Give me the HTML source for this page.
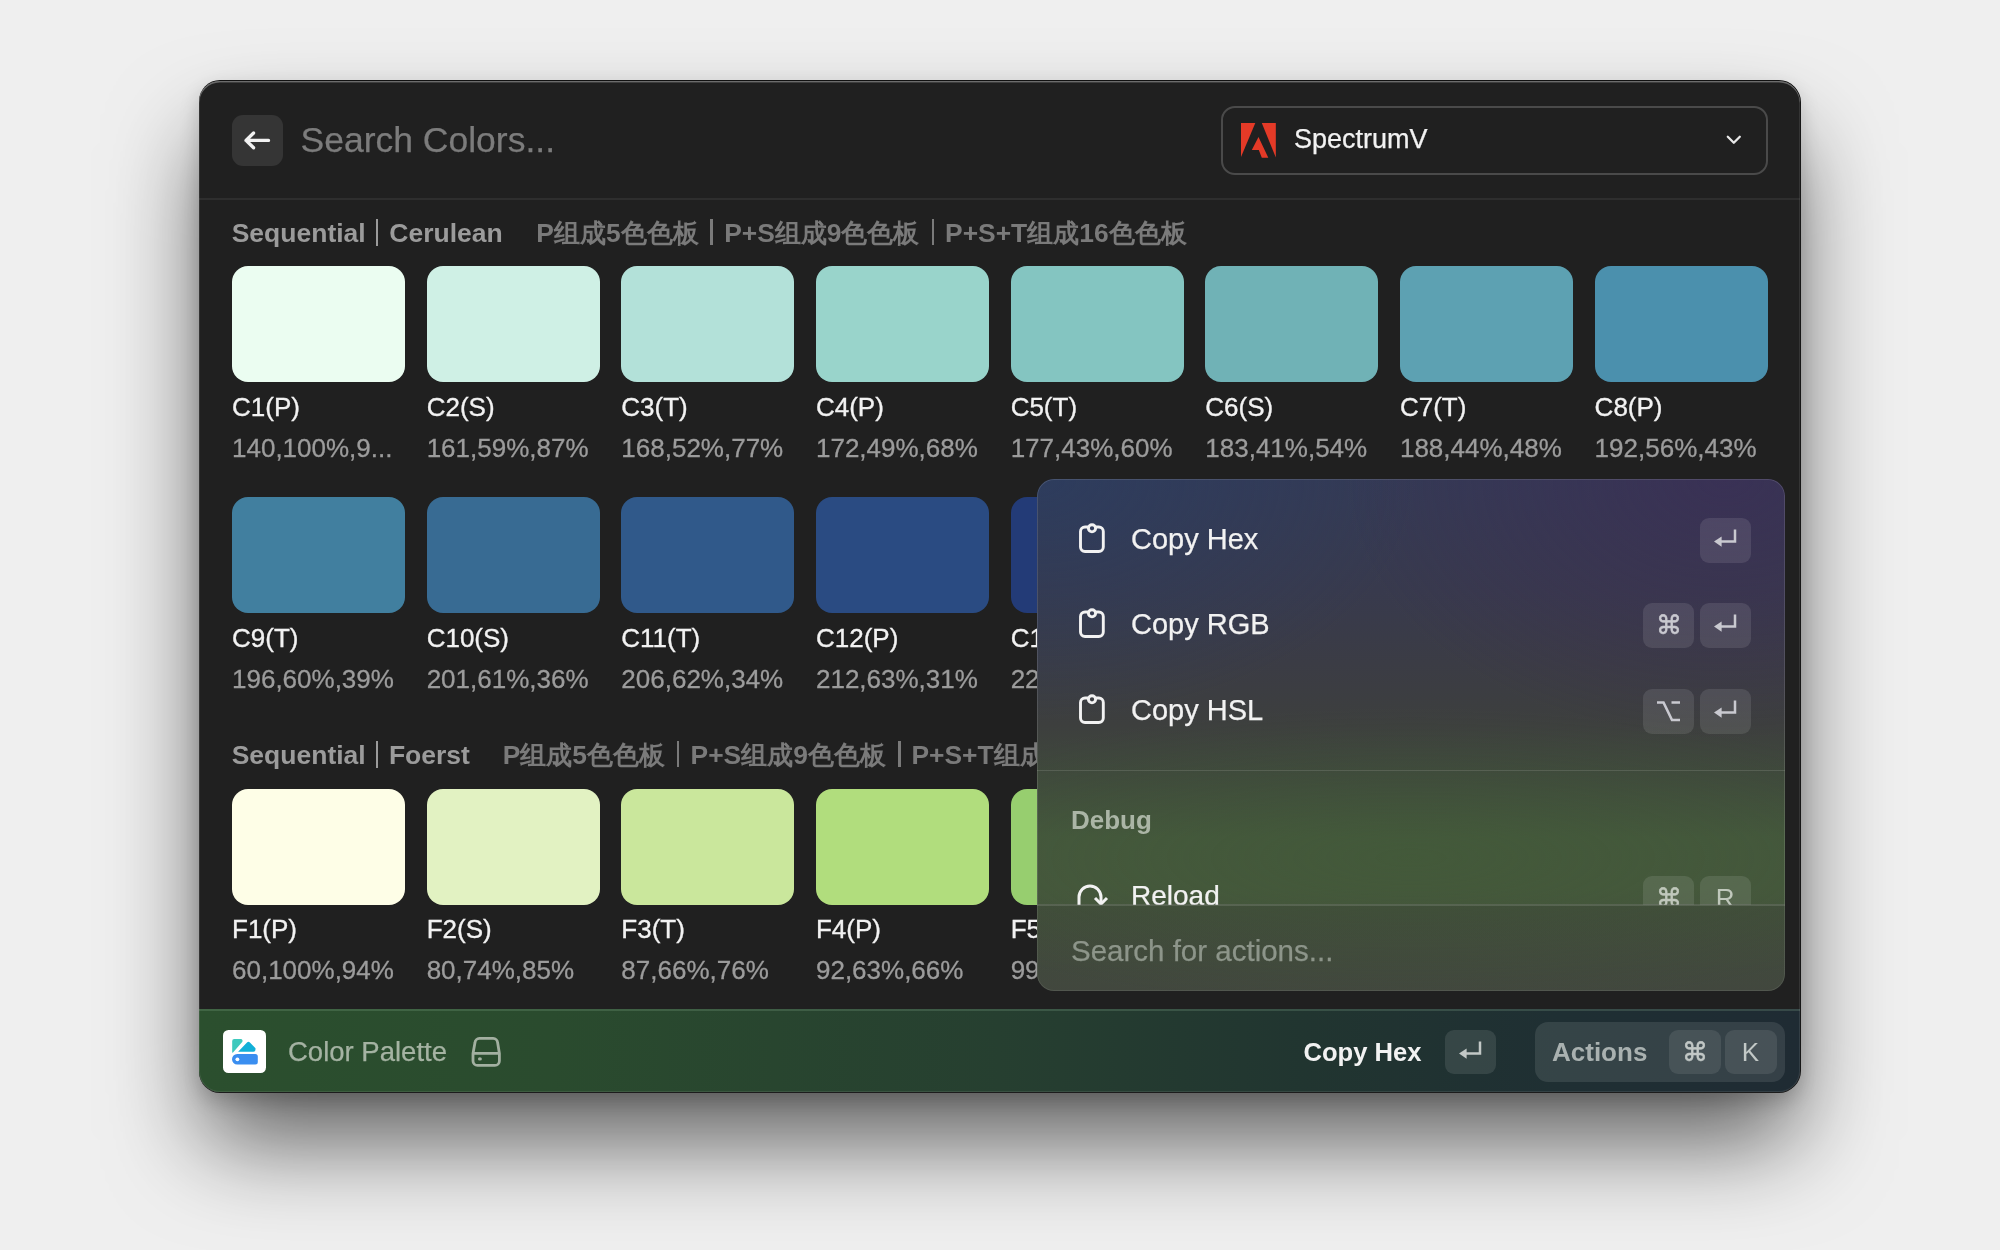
<!DOCTYPE html>
<html><head><meta charset="utf-8">
<style>
*{box-sizing:border-box;margin:0;padding:0}
html,body{width:2000px;height:1250px;overflow:hidden;background:#efefef;font-family:"Liberation Sans",sans-serif}
.abs{position:absolute}
.t{position:absolute;white-space:nowrap;line-height:1}
#win{will-change:transform;position:absolute;left:199px;top:81px;width:1601px;height:1011px;border-radius:21px;background:#202020;overflow:hidden}
#shadow{position:absolute;left:199px;top:81px;width:1601px;height:1011px;border-radius:21px;box-shadow:0 -1px 0 #121212, 0 1px 0 #1c1c1c, 1px 0 0 #161616, 0 55px 95px -5px rgba(0,0,0,0.6), 0 8px 20px rgba(0,0,0,0.18)}
.key{position:absolute;width:51px;height:45px;border-radius:9px;background:rgba(255,255,255,0.10)}
#panel{position:absolute;left:837.5px;top:397.7px;width:748.2px;height:512.7px;border-radius:17px;overflow:hidden;
 background:
  radial-gradient(ellipse 380px 260px at 92% 0%, rgba(62,42,85,0.55), rgba(62,42,85,0) 100%),
  radial-gradient(ellipse 380px 240px at 0% 0%, rgba(40,62,100,0.55), rgba(40,62,100,0) 100%),
  radial-gradient(ellipse 560px 150px at 50% 74%, rgba(65,92,55,0.4), rgba(65,92,55,0) 100%),
  linear-gradient(180deg,#343a55 0%,#383a4d 22%,#3b3c45 36%,#3d3f3e 48%,#3f493c 58%,#44573c 70%,#45573c 80%,#444c3f 100%);
 box-shadow:inset 0 0 0 1px rgba(255,255,255,0.12)}
</style></head>
<body>
<div id="shadow"></div>
<div id="win">
<div class="abs" style="left:33.2px;top:34px;width:50.8px;height:51px;border-radius:11px;background:#353535"></div>
<svg class="abs" style="left:33px;top:34px" width="51" height="51" viewBox="0 0 51 51">
<path d="M36.5 25.4H14 M21.6 18 L14 25.4 L21.6 32.8" stroke="#f2f2f2" stroke-width="3.4" fill="none" stroke-linecap="round" stroke-linejoin="round"/></svg>
<div class="t" style="left:101.5px;top:42.05px;font-size:35.5px;color:#7c7c7c;font-weight:400;-webkit-text-stroke:0.25px #7c7c7c;">Search Colors...</div>
<div class="abs" style="left:1021.5px;top:25.2px;width:547.5px;height:68.4px;border:2px solid #4a4a4a;border-radius:14px"></div>
<svg class="abs" style="left:1042.2px;top:42px" width="35" height="35" viewBox="0 0 35 35">
<polygon points="0,0 14.3,0 0,34" fill="#e43a27"/><polygon points="20.8,0 34.8,0 34.8,34.5" fill="#e43a27"/>
<polygon points="17.5,14 27.3,34.8 20.8,34.8 17.8,27 10.8,27" fill="#e43a27"/></svg>
<div class="t" style="left:1095px;top:45.14px;font-size:27px;color:#f2f2f2;font-weight:400;-webkit-text-stroke:0.25px #f2f2f2;">SpectrumV</div>
<svg class="abs" style="left:1525px;top:52px" width="20" height="14" viewBox="0 0 20 14">
<path d="M3.8 3.8 L9.8 9.8 L15.8 3.8" stroke="#e8e8e8" stroke-width="2.3" fill="none" stroke-linecap="round" stroke-linejoin="round"/></svg>
<div class="abs" style="left:0px;top:117px;width:1601px;height:2px;background:#2e2e2e"></div>

<div class="t" style="left:32.7px;top:138.67px;font-size:26.5px;color:#9b9b9b;font-weight:700;">Sequential</div>
<div class="abs" style="left:176.6px;top:138.4px;width:2.5px;height:26.2px;background:#9b9b9b"></div>
<div class="t" style="left:190.3px;top:138.67px;font-size:26.5px;color:#9b9b9b;font-weight:700;">Cerulean</div>
<div class="t" style="left:337.3px;top:138.75px;font-size:26.4px;color:#7a7a7a;font-weight:700;">P组成5色色板</div>
<div class="t" style="left:525.2px;top:138.75px;font-size:26.4px;color:#7a7a7a;font-weight:700;">P+S组成9色色板</div>
<div class="t" style="left:746.1px;top:138.75px;font-size:26.4px;color:#7a7a7a;font-weight:700;">P+S+T组成16色色板</div>
<div class="abs" style="left:511.4px;top:138.3px;width:2.4px;height:26.0px;background:#7a7a7a"></div>
<div class="abs" style="left:732.8px;top:138.3px;width:2.4px;height:26.0px;background:#7a7a7a"></div>
<div class="abs" style="left:33.0px;top:185px;width:173.0px;height:115.5px;border-radius:16px;background:#ebfdf1"></div>
<div class="t" style="left:33.0px;top:313.19px;font-size:26px;color:#f2f2f2;font-weight:400;-webkit-text-stroke:0.35px #f2f2f2">C1(P)</div>
<div class="t" style="left:33.0px;top:353.89px;font-size:26px;color:#9c9c9c;font-weight:400;-webkit-text-stroke:0.3px #9c9c9c">140,100%,9...</div>
<div class="abs" style="left:227.66px;top:185px;width:173.0px;height:115.5px;border-radius:16px;background:#cff0e5"></div>
<div class="t" style="left:227.66px;top:313.19px;font-size:26px;color:#f2f2f2;font-weight:400;-webkit-text-stroke:0.35px #f2f2f2">C2(S)</div>
<div class="t" style="left:227.66px;top:353.89px;font-size:26px;color:#9c9c9c;font-weight:400;-webkit-text-stroke:0.3px #9c9c9c">161,59%,87%</div>
<div class="abs" style="left:422.32px;top:185px;width:173.0px;height:115.5px;border-radius:16px;background:#b3e1d9"></div>
<div class="t" style="left:422.32px;top:313.19px;font-size:26px;color:#f2f2f2;font-weight:400;-webkit-text-stroke:0.35px #f2f2f2">C3(T)</div>
<div class="t" style="left:422.32px;top:353.89px;font-size:26px;color:#9c9c9c;font-weight:400;-webkit-text-stroke:0.3px #9c9c9c">168,52%,77%</div>
<div class="abs" style="left:616.98px;top:185px;width:173.0px;height:115.5px;border-radius:16px;background:#99d4cb"></div>
<div class="t" style="left:616.98px;top:313.19px;font-size:26px;color:#f2f2f2;font-weight:400;-webkit-text-stroke:0.35px #f2f2f2">C4(P)</div>
<div class="t" style="left:616.98px;top:353.89px;font-size:26px;color:#9c9c9c;font-weight:400;-webkit-text-stroke:0.3px #9c9c9c">172,49%,68%</div>
<div class="abs" style="left:811.64px;top:185px;width:173.0px;height:115.5px;border-radius:16px;background:#84c5c1"></div>
<div class="t" style="left:811.64px;top:313.19px;font-size:26px;color:#f2f2f2;font-weight:400;-webkit-text-stroke:0.35px #f2f2f2">C5(T)</div>
<div class="t" style="left:811.64px;top:353.89px;font-size:26px;color:#9c9c9c;font-weight:400;-webkit-text-stroke:0.3px #9c9c9c">177,43%,60%</div>
<div class="abs" style="left:1006.3px;top:185px;width:173.0px;height:115.5px;border-radius:16px;background:#70b2b6"></div>
<div class="t" style="left:1006.3px;top:313.19px;font-size:26px;color:#f2f2f2;font-weight:400;-webkit-text-stroke:0.35px #f2f2f2">C6(S)</div>
<div class="t" style="left:1006.3px;top:353.89px;font-size:26px;color:#9c9c9c;font-weight:400;-webkit-text-stroke:0.3px #9c9c9c">183,41%,54%</div>
<div class="abs" style="left:1200.96px;top:185px;width:173.0px;height:115.5px;border-radius:16px;background:#5da1b2"></div>
<div class="t" style="left:1200.96px;top:313.19px;font-size:26px;color:#f2f2f2;font-weight:400;-webkit-text-stroke:0.35px #f2f2f2">C7(T)</div>
<div class="t" style="left:1200.96px;top:353.89px;font-size:26px;color:#9c9c9c;font-weight:400;-webkit-text-stroke:0.3px #9c9c9c">188,44%,48%</div>
<div class="abs" style="left:1395.62px;top:185px;width:173.0px;height:115.5px;border-radius:16px;background:#4b90ad"></div>
<div class="t" style="left:1395.62px;top:313.19px;font-size:26px;color:#f2f2f2;font-weight:400;-webkit-text-stroke:0.35px #f2f2f2">C8(P)</div>
<div class="t" style="left:1395.62px;top:353.89px;font-size:26px;color:#9c9c9c;font-weight:400;-webkit-text-stroke:0.3px #9c9c9c">192,56%,43%</div>
<div class="abs" style="left:33.0px;top:416.3px;width:173.0px;height:115.5px;border-radius:16px;background:#417f9f"></div>
<div class="t" style="left:33.0px;top:544.29px;font-size:26px;color:#f2f2f2;font-weight:400;-webkit-text-stroke:0.35px #f2f2f2">C9(T)</div>
<div class="t" style="left:33.0px;top:584.69px;font-size:26px;color:#9c9c9c;font-weight:400;-webkit-text-stroke:0.3px #9c9c9c">196,60%,39%</div>
<div class="abs" style="left:227.66px;top:416.3px;width:173.0px;height:115.5px;border-radius:16px;background:#386b93"></div>
<div class="t" style="left:227.66px;top:544.29px;font-size:26px;color:#f2f2f2;font-weight:400;-webkit-text-stroke:0.35px #f2f2f2">C10(S)</div>
<div class="t" style="left:227.66px;top:584.69px;font-size:26px;color:#9c9c9c;font-weight:400;-webkit-text-stroke:0.3px #9c9c9c">201,61%,36%</div>
<div class="abs" style="left:422.32px;top:416.3px;width:173.0px;height:115.5px;border-radius:16px;background:#30598a"></div>
<div class="t" style="left:422.32px;top:544.29px;font-size:26px;color:#f2f2f2;font-weight:400;-webkit-text-stroke:0.35px #f2f2f2">C11(T)</div>
<div class="t" style="left:422.32px;top:584.69px;font-size:26px;color:#9c9c9c;font-weight:400;-webkit-text-stroke:0.3px #9c9c9c">206,62%,34%</div>
<div class="abs" style="left:616.98px;top:416.3px;width:173.0px;height:115.5px;border-radius:16px;background:#2a4b82"></div>
<div class="t" style="left:616.98px;top:544.29px;font-size:26px;color:#f2f2f2;font-weight:400;-webkit-text-stroke:0.35px #f2f2f2">C12(P)</div>
<div class="t" style="left:616.98px;top:584.69px;font-size:26px;color:#9c9c9c;font-weight:400;-webkit-text-stroke:0.3px #9c9c9c">212,63%,31%</div>
<div class="abs" style="left:811.64px;top:416.3px;width:173.0px;height:115.5px;border-radius:16px;background:#233b77"></div>
<div class="t" style="left:811.64px;top:544.29px;font-size:26px;color:#f2f2f2;font-weight:400;-webkit-text-stroke:0.35px #f2f2f2">C13(S)</div>
<div class="t" style="left:811.64px;top:584.69px;font-size:26px;color:#9c9c9c;font-weight:400;-webkit-text-stroke:0.3px #9c9c9c">220,64%,29%</div>
<div class="abs" style="left:1006.3px;top:416.3px;width:173.0px;height:115.5px;border-radius:16px;background:#22377a"></div>
<div class="t" style="left:1006.3px;top:544.29px;font-size:26px;color:#f2f2f2;font-weight:400;-webkit-text-stroke:0.35px #f2f2f2">C14(T)</div>
<div class="t" style="left:1006.3px;top:584.69px;font-size:26px;color:#9c9c9c;font-weight:400;-webkit-text-stroke:0.3px #9c9c9c">225,65%,27%</div>
<div class="abs" style="left:1200.96px;top:416.3px;width:173.0px;height:115.5px;border-radius:16px;background:#203075"></div>
<div class="t" style="left:1200.96px;top:544.29px;font-size:26px;color:#f2f2f2;font-weight:400;-webkit-text-stroke:0.35px #f2f2f2">C15(S)</div>
<div class="t" style="left:1200.96px;top:584.69px;font-size:26px;color:#9c9c9c;font-weight:400;-webkit-text-stroke:0.3px #9c9c9c">230,66%,25%</div>
<div class="abs" style="left:1395.62px;top:416.3px;width:173.0px;height:115.5px;border-radius:16px;background:#1e2a70"></div>
<div class="t" style="left:1395.62px;top:544.29px;font-size:26px;color:#f2f2f2;font-weight:400;-webkit-text-stroke:0.35px #f2f2f2">C16(P)</div>
<div class="t" style="left:1395.62px;top:584.69px;font-size:26px;color:#9c9c9c;font-weight:400;-webkit-text-stroke:0.3px #9c9c9c">235,67%,23%</div>
<div class="t" style="left:32.7px;top:660.67px;font-size:26.5px;color:#9b9b9b;font-weight:700;">Sequential</div>
<div class="abs" style="left:176.6px;top:660.4px;width:2.5px;height:26.2px;background:#9b9b9b"></div>
<div class="t" style="left:189.9px;top:660.67px;font-size:26.5px;color:#9b9b9b;font-weight:700;">Foerst</div>
<div class="t" style="left:303.7px;top:660.75px;font-size:26.4px;color:#7a7a7a;font-weight:700;">P组成5色色板</div>
<div class="t" style="left:491.6px;top:660.75px;font-size:26.4px;color:#7a7a7a;font-weight:700;">P+S组成9色色板</div>
<div class="t" style="left:712.5px;top:660.75px;font-size:26.4px;color:#7a7a7a;font-weight:700;">P+S+T组成16色色板</div>
<div class="abs" style="left:477.8px;top:660.3px;width:2.4px;height:26.0px;background:#7a7a7a"></div>
<div class="abs" style="left:699.2px;top:660.3px;width:2.4px;height:26.0px;background:#7a7a7a"></div>
<div class="abs" style="left:33.0px;top:708px;width:173.0px;height:115.5px;border-radius:16px;background:#fefee7"></div>
<div class="t" style="left:33.0px;top:834.99px;font-size:26px;color:#f2f2f2;font-weight:400;-webkit-text-stroke:0.35px #f2f2f2">F1(P)</div>
<div class="t" style="left:33.0px;top:875.69px;font-size:26px;color:#9c9c9c;font-weight:400;-webkit-text-stroke:0.3px #9c9c9c">60,100%,94%</div>
<div class="abs" style="left:227.66px;top:708px;width:173.0px;height:115.5px;border-radius:16px;background:#e2f2c2"></div>
<div class="t" style="left:227.66px;top:834.99px;font-size:26px;color:#f2f2f2;font-weight:400;-webkit-text-stroke:0.35px #f2f2f2">F2(S)</div>
<div class="t" style="left:227.66px;top:875.69px;font-size:26px;color:#9c9c9c;font-weight:400;-webkit-text-stroke:0.3px #9c9c9c">80,74%,85%</div>
<div class="abs" style="left:422.32px;top:708px;width:173.0px;height:115.5px;border-radius:16px;background:#cae79c"></div>
<div class="t" style="left:422.32px;top:834.99px;font-size:26px;color:#f2f2f2;font-weight:400;-webkit-text-stroke:0.35px #f2f2f2">F3(T)</div>
<div class="t" style="left:422.32px;top:875.69px;font-size:26px;color:#9c9c9c;font-weight:400;-webkit-text-stroke:0.3px #9c9c9c">87,66%,76%</div>
<div class="abs" style="left:616.98px;top:708px;width:173.0px;height:115.5px;border-radius:16px;background:#b1dd7d"></div>
<div class="t" style="left:616.98px;top:834.99px;font-size:26px;color:#f2f2f2;font-weight:400;-webkit-text-stroke:0.35px #f2f2f2">F4(P)</div>
<div class="t" style="left:616.98px;top:875.69px;font-size:26px;color:#9c9c9c;font-weight:400;-webkit-text-stroke:0.3px #9c9c9c">92,63%,66%</div>
<div class="abs" style="left:811.64px;top:708px;width:173.0px;height:115.5px;border-radius:16px;background:#97ce6f"></div>
<div class="t" style="left:811.64px;top:834.99px;font-size:26px;color:#f2f2f2;font-weight:400;-webkit-text-stroke:0.35px #f2f2f2">F5(T)</div>
<div class="t" style="left:811.64px;top:875.69px;font-size:26px;color:#9c9c9c;font-weight:400;-webkit-text-stroke:0.3px #9c9c9c">99,55%,58%</div>
<div class="abs" style="left:1006.3px;top:708px;width:173.0px;height:115.5px;border-radius:16px;background:#7cbf5f"></div>
<div class="t" style="left:1006.3px;top:834.99px;font-size:26px;color:#f2f2f2;font-weight:400;-webkit-text-stroke:0.35px #f2f2f2">F6(S)</div>
<div class="t" style="left:1006.3px;top:875.69px;font-size:26px;color:#9c9c9c;font-weight:400;-webkit-text-stroke:0.3px #9c9c9c">105,50%,50%</div>
<div class="abs" style="left:1200.96px;top:708px;width:173.0px;height:115.5px;border-radius:16px;background:#62ad52"></div>
<div class="t" style="left:1200.96px;top:834.99px;font-size:26px;color:#f2f2f2;font-weight:400;-webkit-text-stroke:0.35px #f2f2f2">F7(T)</div>
<div class="t" style="left:1200.96px;top:875.69px;font-size:26px;color:#9c9c9c;font-weight:400;-webkit-text-stroke:0.3px #9c9c9c">110,48%,44%</div>
<div class="abs" style="left:1395.62px;top:708px;width:173.0px;height:115.5px;border-radius:16px;background:#4a9a45"></div>
<div class="t" style="left:1395.62px;top:834.99px;font-size:26px;color:#f2f2f2;font-weight:400;-webkit-text-stroke:0.35px #f2f2f2">F8(P)</div>
<div class="t" style="left:1395.62px;top:875.69px;font-size:26px;color:#9c9c9c;font-weight:400;-webkit-text-stroke:0.3px #9c9c9c">115,52%,38%</div>

<div class="abs" style="left:0px;top:928px;width:1601px;height:84px;background:linear-gradient(90deg,#2b4f2e 0%,#2a4b2e 22%,#263f30 50%,#213530 69%,#1f2f33 85%,#1f2b33 100%)"></div>
<div class="abs" style="left:0px;top:928px;width:1601px;height:1.5px;background:rgba(140,180,150,0.22)"></div>
<svg class="abs" style="left:24px;top:949px" width="43" height="43" viewBox="0 0 43 43">
<rect x="0" y="0" width="43" height="43" rx="5.5" fill="#ffffff"/>
<path d="M9.2 11 a2 2 0 0 1 2 -2 H17.8 a1.8 1.8 0 0 1 1.4 2.9 L10 22.6 a0.5 0.5 0 0 1 -0.8 -0.3 Z" fill="#3ec9bd"/>
<path d="M15.1 21.8 L24 12.6 a2 2 0 0 1 2.9 0 L31.3 17 a2.6 2.6 0 0 1 -1.8 4.8 Z" fill="#12b0d8"/>
<path d="M14.2 24.1 H32.3 a2.5 2.5 0 0 1 2.5 2.5 V32 a2.5 2.5 0 0 1 -2.5 2.5 H14.2 a5.2 5.2 0 0 1 0 -10.4 Z" fill="#3a8ef0"/>
<circle cx="14.4" cy="29.3" r="1.9" fill="#fff"/>
</svg>
<div class="t" style="left:89px;top:956.92px;font-size:27.5px;color:#a5b3a3;font-weight:400;-webkit-text-stroke:0.25px #a5b3a3;">Color Palette</div>
<svg class="abs" style="left:272px;top:954.8px" width="31" height="32" viewBox="0 0 31 32">
<path d="M2 17.4 L4 6.6 A4.5 4.5 0 0 1 8.4 2.4 H22.2 A4.5 4.5 0 0 1 26.6 6.6 L28.4 17.4 V24.9 A4.5 4.5 0 0 1 23.9 29.4 H6.5 A4.5 4.5 0 0 1 2 24.9 Z M2 17.4 H28.4" stroke="#a3b0a1" stroke-width="2.8" fill="none" stroke-linejoin="round"/>
<ellipse cx="8.9" cy="22.9" rx="2" ry="1.6" fill="#a3b0a1"/>
</svg>
<div class="t" style="left:1104.5px;top:958.53px;font-size:25.6px;color:#f2f2f2;font-weight:700;">Copy Hex</div>
<div class="key" style="left:1246px;top:948.5px;width:51px;height:44.5px"><svg width="51" height="45" viewBox="0 0 51 45" style="position:absolute;left:0;top:0"><path d="M35 11.5 V23.6 H20" stroke="#c2c8c6" stroke-width="2.5" fill="none"/><path d="M14 23.6 L21.6 18.4 V28.8 Z" fill="#c2c8c6"/></svg></div>
<div class="abs" style="left:1336px;top:941px;width:250px;height:59.5px;border-radius:13px;background:rgba(255,255,255,0.10)"></div>
<div class="t" style="left:1353px;top:958.19px;font-size:26px;color:#a9b1b0;font-weight:700;">Actions</div>
<div class="key" style="left:1470px;top:948.5px;width:51.5px;height:44.5px;background:rgba(255,255,255,0.09)"><div class="t" style="left:0;top:0;width:51px;height:45px;line-height:45px;text-align:center;font-size:26px;color:#c2c8c6;-webkit-text-stroke:0.5px #c2c8c6">&#8984;</div></div>
<div class="key" style="left:1526px;top:948.5px;width:51.5px;height:44.5px;background:rgba(255,255,255,0.09)"><div class="t" style="left:0;top:0;width:51px;height:45px;line-height:45px;text-align:center;font-size:26px;color:#c2c8c6">K</div></div>

<div id="panel">
<svg width="30" height="36" viewBox="0 0 30 36" style="position:absolute;left:40.5px;top:41.3px"><path d="M11.3 7 H8 a4.5 4.5 0 0 0 -4.5 4.5 V27 a4.5 4.5 0 0 0 4.5 4.5 H21.8 a4.5 4.5 0 0 0 4.5 -4.5 V11.5 a4.5 4.5 0 0 0 -4.5 -4.5 H18.7" stroke="#f2f2f2" stroke-width="2.9" fill="none"/><circle cx="15" cy="8.3" r="3.6" stroke="#f2f2f2" stroke-width="2.9" fill="none"/></svg><div class="t" style="left:94.5px;top:46.25px;font-size:29px;color:#f2f2f2;font-weight:400;-webkit-text-stroke:0.25px #f2f2f2;">Copy Hex</div>
<div class="key" style="left:663.1px;top:39.3px;width:51px;height:45px;background:rgba(255,255,255,0.10)"><svg width="51" height="45" viewBox="0 0 51 45" style="position:absolute;left:0;top:0"><path d="M35 11.5 V23.6 H20" stroke="#c9c9d0" stroke-width="2.5" fill="none"/><path d="M14 23.6 L21.6 18.4 V28.8 Z" fill="#c9c9d0"/></svg></div>
<svg width="30" height="36" viewBox="0 0 30 36" style="position:absolute;left:40.5px;top:126.8px"><path d="M11.3 7 H8 a4.5 4.5 0 0 0 -4.5 4.5 V27 a4.5 4.5 0 0 0 4.5 4.5 H21.8 a4.5 4.5 0 0 0 4.5 -4.5 V11.5 a4.5 4.5 0 0 0 -4.5 -4.5 H18.7" stroke="#f2f2f2" stroke-width="2.9" fill="none"/><circle cx="15" cy="8.3" r="3.6" stroke="#f2f2f2" stroke-width="2.9" fill="none"/></svg><div class="t" style="left:94.5px;top:131.75px;font-size:29px;color:#f2f2f2;font-weight:400;-webkit-text-stroke:0.25px #f2f2f2;">Copy RGB</div>
<div class="key" style="left:663.1px;top:124.8px;width:51px;height:45px;background:rgba(255,255,255,0.10)"><svg width="51" height="45" viewBox="0 0 51 45" style="position:absolute;left:0;top:0"><path d="M35 11.5 V23.6 H20" stroke="#c9c9d0" stroke-width="2.5" fill="none"/><path d="M14 23.6 L21.6 18.4 V28.8 Z" fill="#c9c9d0"/></svg></div>
<div class="key" style="left:606.5px;top:124.8px;width:51px;height:45px;background:rgba(255,255,255,0.10)"><div class="t" style="left:0;top:0;width:51px;height:45px;line-height:45px;text-align:center;font-size:26px;color:#c9c9d0;-webkit-text-stroke:0.5px #c9c9d0">&#8984;</div></div>
<svg width="30" height="36" viewBox="0 0 30 36" style="position:absolute;left:40.5px;top:212.3px"><path d="M11.3 7 H8 a4.5 4.5 0 0 0 -4.5 4.5 V27 a4.5 4.5 0 0 0 4.5 4.5 H21.8 a4.5 4.5 0 0 0 4.5 -4.5 V11.5 a4.5 4.5 0 0 0 -4.5 -4.5 H18.7" stroke="#f2f2f2" stroke-width="2.9" fill="none"/><circle cx="15" cy="8.3" r="3.6" stroke="#f2f2f2" stroke-width="2.9" fill="none"/></svg><div class="t" style="left:94.5px;top:217.25px;font-size:29px;color:#f2f2f2;font-weight:400;-webkit-text-stroke:0.25px #f2f2f2;">Copy HSL</div>
<div class="key" style="left:663.1px;top:210.3px;width:51px;height:45px;background:rgba(255,255,255,0.10)"><svg width="51" height="45" viewBox="0 0 51 45" style="position:absolute;left:0;top:0"><path d="M35 11.5 V23.6 H20" stroke="#c9c9d0" stroke-width="2.5" fill="none"/><path d="M14 23.6 L21.6 18.4 V28.8 Z" fill="#c9c9d0"/></svg></div>
<div class="key" style="left:606.5px;top:210.3px;width:51px;height:45px;background:rgba(255,255,255,0.10)"><svg width="51" height="45" viewBox="0 0 51 45" style="position:absolute;left:0;top:0"><path d="M14 13.5 H20.5 L29 31 H37 M28.5 13.5 H37" stroke="#c9c9d0" stroke-width="2.6" fill="none"/></svg></div>
<div class="abs" style="left:0;top:291.1px;width:748px;height:1.6px;background:rgba(255,255,255,0.12)"></div>
<div class="t" style="left:34.5px;top:328.29px;font-size:26px;color:#abb5a6;font-weight:700;">Debug</div>
<div class="abs" style="left:0;top:381.3px;width:748px;height:45px;overflow:hidden"><svg width="36" height="40" viewBox="0 0 36 40" style="position:absolute;left:38.0px;top:22.5px"><path d="M4 24 V15 a11 11 0 0 1 22 0 V21" stroke="#f2f2f2" stroke-width="3" fill="none"/><path d="M20 16 L26 22 L32 16" stroke="#f2f2f2" stroke-width="3" fill="none"/></svg><div class="t" style="left:94.5px;top:22.3px;font-size:28px;color:#f2f2f2;-webkit-text-stroke:0.25px #f2f2f2">Reload</div><div class="key" style="left:606.5px;top:16px"><div class="t" style="left:0;top:0;width:51px;height:45px;line-height:45px;text-align:center;font-size:26px;color:#c0c8bc;-webkit-text-stroke:0.5px #c0c8bc">&#8984;</div></div><div class="key" style="left:663.1px;top:16px"><div class="t" style="left:0;top:0;width:51px;height:45px;line-height:45px;text-align:center;font-size:26px;color:#c0c8bc">R</div></div></div>
<div class="abs" style="left:0;top:425.8px;width:748px;height:87.5px;background:linear-gradient(180deg,rgba(50,50,50,0.22),rgba(60,60,60,0.30))"></div>
<div class="abs" style="left:0;top:425.8px;width:748px;height:1.5px;background:rgba(255,255,255,0.12)"></div>
<div class="t" style="left:34.5px;top:456.93px;font-size:29.5px;color:#8d958a;font-weight:400;-webkit-text-stroke:0.25px #8d958a;">Search for actions...</div>

</div>
<div style="position:absolute;left:0;top:0;width:1601px;height:1011px;border-radius:21px;box-shadow:inset 0 0 0 1px rgba(255,255,255,0.09), inset 0 1.5px 0 rgba(255,255,255,0.28)"></div>
</div>
</body></html>
